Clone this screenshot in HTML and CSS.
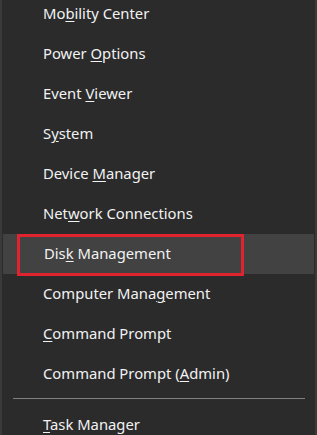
FILE: index.html
```html
<!DOCTYPE html>
<html lang="en">
<head>
    <meta charset="UTF-8">
    <meta name="viewport" content="width=device-width, initial-scale=1.0">
    <title>Quick Link Menu</title>
    <link rel="stylesheet" href="styles.css">
</head>
<body>
    <div class="menu">
        <ul class="menu-list">
            <li class="menu-item">Mo<u>b</u>ility Center</li>
            <li class="menu-item">Power <u>O</u>ptions</li>
            <li class="menu-item">Event <u>V</u>iewer</li>
            <li class="menu-item">S<u>y</u>stem</li>
            <li class="menu-item">Device <u>M</u>anager</li>
            <li class="menu-item">Net<u>w</u>ork Connections</li>
            <li class="menu-item active"><span class="mark">Dis<u>k</u> Management</span></li>
            <li class="menu-item">Computer Mana<u>g</u>ement</li>
            <li class="menu-item"><u>C</u>ommand Prompt</li>
            <li class="menu-item">Command Prompt (<u>A</u>dmin)</li>
        </ul>
        <hr class="separator">
        <ul class="menu-list">
            <li class="menu-item">
                <u>T</u>ask Manager
            </li>
        </ul>
    </div>
</body>
</html>
```

FILE: styles.css
```css
* {
    margin: 0;
    padding: 0;
    box-sizing: border-box;
}

html, body {
    width: 317px;
    height: 435px;
    overflow: hidden;
    background: #2b2b2b;
}

body {
    font-family: 'Noto Sans', 'Open Sans', sans-serif;
    font-size: 14.8px;
    color: #f2f2f2;
}

.menu {
    height: 441px;
    border-left: 2px solid #3a3a3a;
    border-right: 2px solid #3a3a3a;
    margin-top: -6px;
}

.menu-list {
    list-style: none;
}

.menu-item {
    height: 40px;
    line-height: 38px;
    padding-left: 41px;
    white-space: nowrap;
}

.menu-item u {
    text-decoration-thickness: 1px;
    text-underline-offset: 2px;
}

.menu-item.active {
    background: #424242;
    margin: 0 1px;
    padding-left: 14px;
}

.mark {
    display: block;
    height: 42px;
    width: 227px;
    line-height: 32px;
    padding-left: 24px;
    border: 3px solid #e0232e;
}

.separator {
    border: none;
    border-top: 1px solid #808080;
    margin: 4px 10px 6px 11px;
}
```
